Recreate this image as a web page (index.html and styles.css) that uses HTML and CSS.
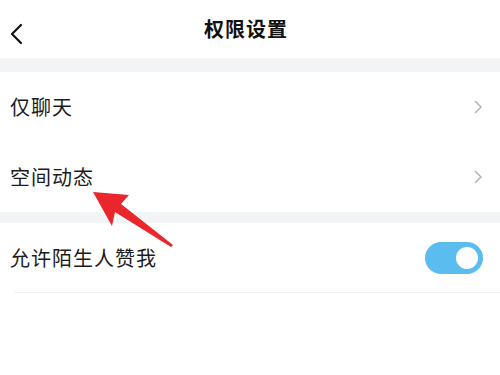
FILE: index.html
```
<!DOCTYPE html>
<html lang="zh">
<head>
<meta charset="utf-8">
<link rel="stylesheet" href="styles.css">
</head>
<body>
<div class="page">
  <header class="topbar">
    <svg class="back" width="14" height="22" viewBox="0 0 14 22"><path d="M12 2 L3 11 L12 20" fill="none" stroke="#111" stroke-width="2.2" stroke-linecap="round" stroke-linejoin="round"/></svg>
    <h1 class="title">权限设置</h1>
  </header>
  <div class="gap gap-top"></div>
  <section class="group">
    <div class="row">
      <span class="label">仅聊天</span>
      <svg class="chev" width="9" height="14" viewBox="0 0 9 14"><path d="M1.5 1.5 L7 7 L1.5 12.5" fill="none" stroke="#b3b3b3" stroke-width="1.5" stroke-linecap="round" stroke-linejoin="round"/></svg>
    </div>
    <div class="row">
      <span class="label">空间动态</span>
      <svg class="chev" width="9" height="14" viewBox="0 0 9 14"><path d="M1.5 1.5 L7 7 L1.5 12.5" fill="none" stroke="#b3b3b3" stroke-width="1.5" stroke-linecap="round" stroke-linejoin="round"/></svg>
    </div>
  </section>
  <div class="gap gap-mid"></div>
  <section class="group">
    <div class="row row-line">
      <span class="label">允许陌生人赞我</span>
      <span class="toggle"><span class="knob"></span></span>
    </div>
  </section>
  <svg class="arrow" width="500" height="375" viewBox="0 0 500 375"><polygon points="93,192 129,195 121,204 173,245 171,247 115,212 112,226" fill="#e8262c"/></svg>
</div>
</body>
</html>
```
FILE: styles.css
```
html, body { margin: 0; padding: 0; background: #fff; }
body { font-family: "Noto Sans CJK SC", "Noto Sans", sans-serif; color: #1c1c1c; }
.page { position: relative; width: 500px; height: 375px; overflow: hidden; background: #fff; }
.topbar { height: 58px; display: flex; align-items: center; justify-content: center; position: relative; }
.back { position: absolute; left: 9px; top: 23px; }
.title { margin: 0 8px 0 0; font-size: 20px; font-weight: 700; letter-spacing: 1px; color: #111; line-height: 1; }
.gap { background: #f3f4f6; }
.gap-top { height: 14px; }
.gap-mid { height: 11px; }
.row { height: 70px; display: flex; align-items: center; justify-content: space-between; padding: 0 17px 0 10px; box-sizing: border-box; }
.label { font-size: 20px; letter-spacing: 1px; line-height: 1; }
.row-line { position: relative; }
.row-line::after { content: ""; position: absolute; left: 14px; right: 0; bottom: 0; height: 1px; background: #f0f0f0; }
.toggle { width: 58px; height: 32px; border-radius: 16px; background: #5bbcef; display: flex; align-items: center; justify-content: flex-end; padding: 0 5px; box-sizing: border-box; margin-right: 0; }
.row-line { padding-right: 17px; }
.knob { width: 22px; height: 22px; border-radius: 50%; background: #fff; }
.arrow { position: absolute; left: 0; top: 0; }
```
